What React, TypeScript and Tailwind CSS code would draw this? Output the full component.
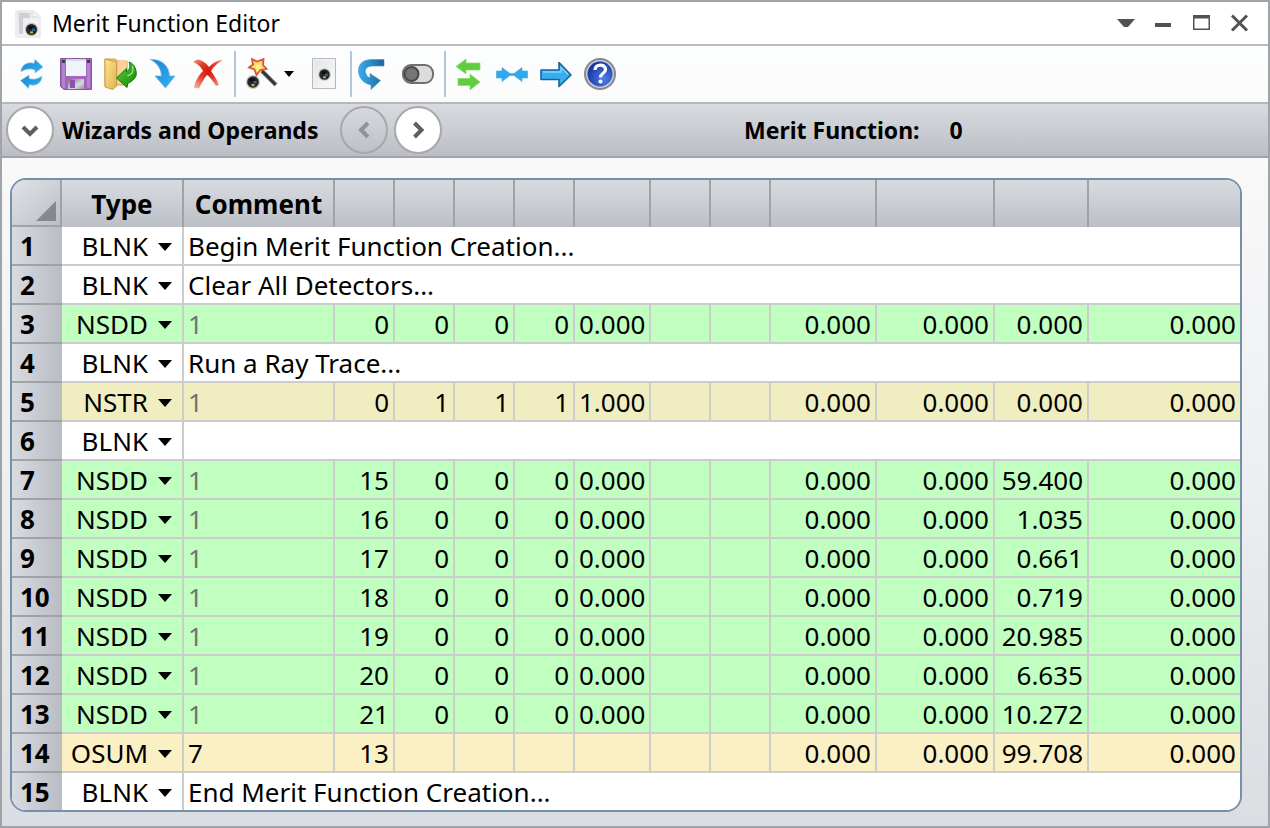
import type { ReactNode } from 'react';

type Row = {
  type: string;
  comment: string;
  tone: string;
  muted?: boolean;
  values?: string[];
};

const GREEN = 'bg-[#c0ffc0]';
const KHAKI = 'bg-[#f0eec0]';
const CREAM = 'bg-[#faf0c4]';
const WHITE = 'bg-white';

const nsdd = (index: string, result: string): Row => ({
  type: 'NSDD',
  comment: '1',
  tone: GREEN,
  muted: true,
  values: [index, '0', '0', '0', '0.000', '', '', '0.000', '0.000', result, '0.000'],
});

const blnk = (comment: string): Row => ({ type: 'BLNK', comment, tone: WHITE });

const rows: Row[] = [
  blnk('Begin Merit Function Creation...'),
  blnk('Clear All Detectors...'),
  nsdd('0', '0.000'),
  blnk('Run a Ray Trace...'),
  {
    type: 'NSTR',
    comment: '1',
    tone: KHAKI,
    muted: true,
    values: ['0', '1', '1', '1', '1.000', '', '', '0.000', '0.000', '0.000', '0.000'],
  },
  blnk(''),
  nsdd('15', '59.400'),
  nsdd('16', '1.035'),
  nsdd('17', '0.661'),
  nsdd('18', '0.719'),
  nsdd('19', '20.985'),
  nsdd('20', '6.635'),
  nsdd('21', '10.272'),
  {
    type: 'OSUM',
    comment: '7',
    tone: CREAM,
    values: ['13', '', '', '', '', '', '', '0.000', '0.000', '99.708', '0.000'],
  },
  blnk('End Merit Function Creation...'),
];

const columns = [
  'w-[50px]', 'w-[122px]', 'w-[151px]', 'w-[60px]', 'w-[60px]', 'w-[60px]', 'w-[60px]',
  'w-[76px]', 'w-[60px]', 'w-[60px]', 'w-[106px]', 'w-[118px]', 'w-[94px]', '',
];

const operandTypes = ['BLNK', 'NSDD', 'NSTR', 'OSUM'];

function Lens({ x, y, s = 1 }: { x: number; y: number; s?: number }) {
  return (
    <g transform={`translate(${x} ${y}) scale(${s})`}>
      <circle r="7" fill="#8a8d90" opacity="0.45" />
      <circle r="5.8" fill="#25282c" />
      <path d="M-3 -3.5h5v3h-5z" fill="#0d0f12" />
      <path d="M0.500 -1h3v2.500h-3z" fill="#256d92" />
      <path d="M-1.500 2h3v2.200h-3z" fill="#c9b43c" />
    </g>
  );
}

function Icon({ children, className = '' }: { children: ReactNode; className?: string }) {
  return (
    <svg viewBox="0 0 32 32" className={`h-8 w-8 shrink-0 overflow-visible ${className}`} aria-hidden="true">
      {children}
    </svg>
  );
}

function Tool({ label, children, className = 'w-8' }: { label: string; children: ReactNode; className?: string }) {
  return (
    <button type="button" aria-label={label} className={`flex h-8 shrink-0 items-center ${className}`}>
      {children}
    </button>
  );
}

function Separator() {
  return <div className="mr-1.5 ml-2.5 h-[46px] w-0.5 shrink-0 bg-[#b4c5dc]" />;
}

function Gradients() {
  return (
    <svg className="absolute h-0 w-0" aria-hidden="true">
      <defs>
        <linearGradient id="blue" x1="0" y1="0" x2="1" y2="1">
          <stop offset="0" stopColor="#2283c8" />
          <stop offset="1" stopColor="#30b1fa" />
        </linearGradient>
        <linearGradient id="steel" x1="0" y1="0" x2="1" y2="1">
          <stop offset="0" stopColor="#3cb0ea" />
          <stop offset="1" stopColor="#216fa9" />
        </linearGradient>
        <linearGradient id="undo" x1="0" y1="0" x2="1" y2="0">
          <stop offset="0" stopColor="#35aeee" />
          <stop offset="1" stopColor="#1d659e" />
        </linearGradient>
        <linearGradient id="green" x1="0" y1="0" x2="1" y2="1">
          <stop offset="0" stopColor="#62cf3b" />
          <stop offset="1" stopColor="#13870b" />
        </linearGradient>
        <linearGradient id="folder" x1="0" y1="0" x2="1" y2="1">
          <stop offset="0" stopColor="#ffe58c" />
          <stop offset="1" stopColor="#dfb356" />
        </linearGradient>
        <radialGradient id="red" cx="0.5" cy="0.4" r="0.65">
          <stop offset="0" stopColor="#d51707" />
          <stop offset="0.45" stopColor="#e33b2a" />
          <stop offset="1" stopColor="#f6a095" />
        </radialGradient>
        <radialGradient id="star" cx="0.5" cy="0.5" r="0.6">
          <stop offset="0" stopColor="#fff59a" />
          <stop offset="1" stopColor="#ffc02c" />
        </radialGradient>
        <linearGradient id="metal" x1="0" y1="0" x2="1" y2="1">
          <stop offset="0" stopColor="#77777b" />
          <stop offset="0.6" stopColor="#d9dadd" />
          <stop offset="1" stopColor="#98999d" />
        </linearGradient>
        <linearGradient id="page" x1="0" y1="0" x2="1" y2="1">
          <stop offset="0" stopColor="#e4e5e7" />
          <stop offset="1" stopColor="#fafafa" />
        </linearGradient>
        <radialGradient id="help" cx="0.65" cy="0.7" r="0.8">
          <stop offset="0" stopColor="#4d7ce9" />
          <stop offset="1" stopColor="#102d99" />
        </radialGradient>
      </defs>
    </svg>
  );
}

function TitleBar() {
  const control = 'flex h-6 w-6 items-center justify-center';
  return (
    <header className="flex h-11 items-center justify-between border-b-2 border-[#b9bac0] bg-white pr-[17px] pl-3">
      <div className="flex items-center gap-2.5">
        <svg viewBox="0 0 28 32" className="h-8 w-7" aria-hidden="true">
          <path d="M1 3h19l7 6v22H1z" fill="#eeeeef" />
          <path d="M3 4h15l6 6v18H3z" fill="url(#page)" />
          <path d="M5 6h11v5H9v16H5z" fill="#cfd0d2" />
          <path d="M18 4v6h6" fill="#f2f2f2" stroke="#d9dadb" />
          <Lens x={17.5} y={22.5} s={0.95} />
        </svg>
        <h1 className="text-[23px] leading-8 text-black">Merit Function Editor</h1>
      </div>
      <div className="flex items-center gap-3.5 text-[#505254]">
        <button type="button" aria-label="Window menu" className={control}>
          <svg viewBox="0 0 24 24" className="h-6 w-6"><path d="M4 8h18l-7 8h-4z" fill="currentColor" /></svg>
        </button>
        <button type="button" aria-label="Minimize" className={control}>
          <svg viewBox="0 0 24 24" className="h-6 w-6"><path d="M4 12h16v4H4z" fill="currentColor" /></svg>
        </button>
        <button type="button" aria-label="Maximize" className={control}>
          <svg viewBox="0 0 24 24" className="h-6 w-6">
            <path d="M4 4h17v15H4zM5.500 7.500v10h14v-10z" fill="currentColor" fillRule="evenodd" />
          </svg>
        </button>
        <button type="button" aria-label="Close" className={control}>
          <svg viewBox="0 0 24 24" className="h-6 w-6">
            <path d="M5 4.500l15 15M20 4.500l-15 15" stroke="currentColor" strokeWidth="3" />
          </svg>
        </button>
      </div>
    </header>
  );
}

function Toolbar() {
  return (
    <div role="toolbar" aria-label="Editor tools" className="flex h-[58px] items-center border-b-2 border-[#b6b7ba] bg-linear-to-b from-[#fdfeff] to-[#fbfbfb] pl-3.5">
      <div className="flex gap-3">
        <Tool label="Update">
          <Icon>
            <path d="M5 14C5 7 12 3 18 5.500L19 1.500L27 9L19 15V12C14 10 9 11 5 14z" fill="url(#blue)" stroke="#8cc8f0" strokeWidth="0.6" />
            <path d="M26 18C26 25 19 29 13.500 26.500L12.500 30.500L4.500 22.500L13 17V20.500C18 22 22 21 26 18z" fill="url(#blue)" stroke="#8cc8f0" strokeWidth="0.6" />
          </Icon>
        </Tool>
        <Tool label="Save">
          <Icon>
            <path d="M0.500 0.500h31v31H4l-3.500-3z" fill="#a266bd" stroke="#855a9c" />
            <path d="M2 2h3v28H3l-1-2zM27 2h3v28h-3z" fill="#b582cd" />
            <path d="M6 1h20v17H6z" fill="#eef4fa" />
            <path d="M6 1h20v2H6z" fill="#d3dce8" />
            <path d="M8 21h16v10H8z" fill="url(#metal)" />
            <path d="M10 22h5v8h-5z" fill="#8e4fae" />
            <path d="M2 2h3v3H2zM27 2h3v3h-3z" fill="#4e3160" />
          </Icon>
        </Tool>
        <Tool label="Load">
          <Icon>
            <path d="M1 1h10l3 2h9v24H13l-3 2L1 28z" fill="#f0c878" stroke="#d0a050" />
            <path d="M14 2.500h8.500V26H14z" fill="#fbd09a" />
            <path d="M1 1L12.500 4v24L9 31.500L1 29z" fill="url(#folder)" stroke="#c79a3f" />
            <path d="M25 4C31 6 33 13 32 18C30 22 27 24 24 25L23 29.500L12.500 20L22.500 10.500V14C26 12 26.500 8 25 4z" fill="url(#green)" stroke="#0d7a0b" />
            <path d="M28.500 8C30 13 29 16 23.500 18" fill="none" stroke="#8be36f" strokeWidth="1.500" />
          </Icon>
        </Tool>
        <Tool label="Insert">
          <Icon>
            <path d="M2.500 1.500C13 1 21 7 21.500 18H27L17.500 30L7 18H13.500C13 10 9 5 2.500 1.500z" fill="url(#blue)" stroke="#71b7e8" strokeWidth="0.8" />
          </Icon>
        </Tool>
        <Tool label="Delete">
          <Icon>
            <path d="M1 4L5 1.500C10 2 14 5 17 9C21 5 25 2 31 2C26 5 22 8 19 13C22 17 25 22 27 27L24 28C21 23 18 19 15 17C11 22 9 26 7 30.500L2 29.500C3 23 7 17 11 13C9 9 6 6 1 4z" fill="url(#red)" />
          </Icon>
        </Tool>
      </div>
      <Separator />
      <div className="flex gap-3">
        <Tool label="Wizards" className="w-[54px] justify-between pr-0.5 pl-1">
          <Icon>
            <path d="M16 13L30 27" stroke="#85878a" strokeWidth="4.500" />
            <path d="M16 13L29.500 26.500" stroke="#303336" strokeWidth="2.500" />
            <path d="M6 1L11 3.500L17.500 1L17 7L20.500 11L14.500 12L10.500 17L8.500 11.500L3 9.500L7 6.500z" fill="url(#star)" stroke="#d9553a" strokeWidth="1.800" />
            <Lens x={7} y={24} />
          </Icon>
          <svg viewBox="0 0 10 6" className="h-1.5 w-2.5" aria-hidden="true"><path d="M0 0h10L5 6z" fill="#000" /></svg>
        </Tool>
        <Tool label="Operand settings">
          <Icon>
            <path d="M4.500 0.500h23v30h-23z" fill="#f3f3f5" stroke="#b8b9bc" />
            <path d="M6 2h20v27H6z" fill="url(#page)" />
            <Lens x={16.500} y={16.500} s={0.9} />
          </Icon>
        </Tool>
      </div>
      <Separator />
      <div className="flex gap-3">
        <Tool label="Undo">
          <Icon>
            <path d="M26 1.500V8H15C8 8 6 12 8 16C9 18.500 10 19 12 20V15.500L22.500 22.500L13 31.500V27C4 25 0 18 0.500 12C1 5 6 1.500 14 1.500z" fill="url(#undo)" stroke="#4c91c0" strokeWidth="0.600" />
          </Icon>
        </Tool>
        <Tool label="Toggle">
          <Icon>
            <rect x="1" y="7" width="30" height="18" rx="8" fill="#dcdcdc" stroke="#707070" strokeWidth="2" />
            <circle cx="9.500" cy="16" r="7" fill="#757575" stroke="#4a4a4a" strokeWidth="2" />
          </Icon>
        </Tool>
      </div>
      <Separator />
      <div className="flex gap-3">
        <Tool label="Swap">
          <Icon>
            <path d="M4 8.500L14 1V5H28V12H14V16z" fill="#60cd40" stroke="#86dc6c" strokeWidth="0.700" />
            <path d="M28 24L18 16V20.500H6V27.500H18V32z" fill="#60cd40" stroke="#86dc6c" strokeWidth="0.700" />
          </Icon>
        </Tool>
        <Tool label="Fit columns">
          <Icon>
            <path d="M0.500 13H6V9.500L14 15.500H18L26 9.500V13H31.500V20H26V23.500L18 17.500H14L6 23.500V20H0.500z" fill="#2fa9ef" stroke="#55a9dd" strokeWidth="0.700" />
          </Icon>
        </Tool>
        <Tool label="Go to">
          <Icon>
            <path d="M1 12H19V4.500L31 17L19 28.500V21.500H1z" fill="#38aeee" stroke="#14659f" strokeWidth="1.600" strokeLinejoin="round" />
            <path d="M3 14H21V9.500L28 16.500" fill="none" stroke="#88d4fa" strokeWidth="1.300" />
          </Icon>
        </Tool>
        <Tool label="Help">
          <Icon>
            <circle cx="16" cy="16" r="16" fill="#85888e" />
            <circle cx="16" cy="16" r="14" fill="#c9cbd1" />
            <circle cx="16" cy="16" r="12.500" fill="url(#help)" />
            <path d="M11 12C11 5.500 21.500 5.500 21.500 11.500C21.500 15.500 16.500 15 16.500 19.500" fill="none" stroke="#fff" strokeWidth="3.200" />
            <circle cx="16.500" cy="23.500" r="2" fill="#fff" />
          </Icon>
        </Tool>
      </div>
    </div>
  );
}

function RoundButton({ label, path, disabled = false }: { label: string; path: string; disabled?: boolean }) {
  const look = disabled ? 'text-[#929396]' : 'bg-white text-[#5f5f60]';
  return (
    <button
      type="button"
      aria-label={label}
      disabled={disabled}
      className={`flex h-12 w-12 shrink-0 items-center justify-center rounded-full border-2 border-[#a8a8aa] ${look}`}
    >
      <svg viewBox="0 0 24 24" className="h-6 w-6" aria-hidden="true">
        <path d={path} fill="none" stroke="currentColor" strokeWidth="4" />
      </svg>
    </button>
  );
}

function WizardBar() {
  return (
    <div className="flex h-[54px] items-center border-b-2 border-[#a2a4a9] bg-linear-to-b from-[#d8dbe0] to-[#bbbec4] pl-1 text-[23px] leading-8 font-bold">
      <RoundButton label="Expand wizards and operands" path="M5 9l7 7 7-7" />
      <span className="w-[280px] shrink-0 pl-2">Wizards and Operands</span>
      <div className="flex shrink-0 gap-1.5 pl-1.5">
        <RoundButton label="Previous" path="M16 5l-7 7 7 7" disabled />
        <RoundButton label="Next" path="M8.500 5l7 7-7 7" />
      </div>
      <div className="flex shrink-0 gap-[30px] pl-[302px]">
        <span>Merit Function:</span>
        <span>0</span>
      </div>
    </div>
  );
}

function HeaderCell({ children }: { children?: ReactNode }) {
  return (
    <th scope="col" className="border-r-2 border-[#a0a2a6] bg-linear-to-b from-[#d8dbe0] to-[#bcbfc6] px-0 pt-0.5 pb-0 font-bold last:border-r-0">
      {children}
    </th>
  );
}

function OperandRow({ row, index }: { row: Row; index: number }) {
  const cell = 'border-b-2 border-[#cccccc] px-1 pt-0.5 pb-0 group-last:border-b-0';
  return (
    <tr className={`group h-[39px] last:h-[37px] ${row.tone}`}>
      <th scope="row" className="border-b-2 border-[#a0a2a6] bg-linear-to-r from-[#d8dbe0] to-[#b9bcc3] pt-0.5 pr-0 pb-0 pl-2 text-left font-bold group-last:border-b-0">
        {index + 1}
      </th>
      <td className="border-r-2 border-b-2 border-[#cccccc] px-0 pt-0.5 pb-0 group-last:border-b-0">
        <div className="relative flex items-center">
          <select
            aria-label={`Operand type, row ${index + 1}`}
            defaultValue={row.type}
            className="h-[35px] w-full appearance-none bg-transparent pr-[34px] [text-align-last:right] outline-none"
          >
            {operandTypes.map((name) => (
              <option key={name}>{name}</option>
            ))}
          </select>
          <svg viewBox="0 0 14 8" className="pointer-events-none absolute right-2.5 h-2 w-3.5" aria-hidden="true">
            <path d="M0 0h14L7 8z" fill="#000" />
          </svg>
        </div>
      </td>
      {row.values ? (
        <>
          <td className={`${cell} border-r-2 ${row.muted ? 'text-[#737373]' : ''}`}>{row.comment}</td>
          {row.values.map((value, i) => (
            <td key={i} className={`${cell} border-r-2 text-right last:border-r-0`}>
              {value}
            </td>
          ))}
        </>
      ) : (
        <td colSpan={12} className={cell}>{row.comment}</td>
      )}
    </tr>
  );
}

export default function App() {
  return (
    <main className="flex min-h-screen flex-col border-2 border-[#a0a4a8] bg-white font-['Noto_Sans',sans-serif] text-black">
      <Gradients />
      <TitleBar />
      <Toolbar />
      <WizardBar />
      <section className="flex-1 bg-linear-to-b from-[#f9f9f9] via-[#eceef1] to-[#dadde1] pt-5 pr-[26px] pb-3.5 pl-2">
        <div className="overflow-hidden rounded-2xl border-2 border-[#7590aa] bg-white">
          <table className="w-full table-fixed border-separate border-spacing-0 text-[26px] leading-[35px] whitespace-nowrap">
            <colgroup>
              {columns.map((width, i) => (
                <col key={i} className={width} />
              ))}
            </colgroup>
            <thead>
              <tr className="h-[47px]">
                <th className="border-r-2 border-b-2 border-[#a0a2a6] bg-linear-to-br from-[#e0e3e7] to-[#bcbfc6] p-0">
                  <button type="button" aria-label="Select all" className="flex h-11 w-full items-end justify-end pr-1 pb-1">
                    <svg viewBox="0 0 20 20" className="h-5 w-5" aria-hidden="true">
                      <path d="M20 0v20H0z" fill="#85888c" />
                    </svg>
                  </button>
                </th>
                <HeaderCell>Type</HeaderCell>
                <HeaderCell>Comment</HeaderCell>
                {columns.slice(3).map((_, i) => (
                  <HeaderCell key={i} />
                ))}
              </tr>
            </thead>
            <tbody>
              {rows.map((row, i) => (
                <OperandRow key={i} row={row} index={i} />
              ))}
            </tbody>
          </table>
        </div>
      </section>
    </main>
  );
}
